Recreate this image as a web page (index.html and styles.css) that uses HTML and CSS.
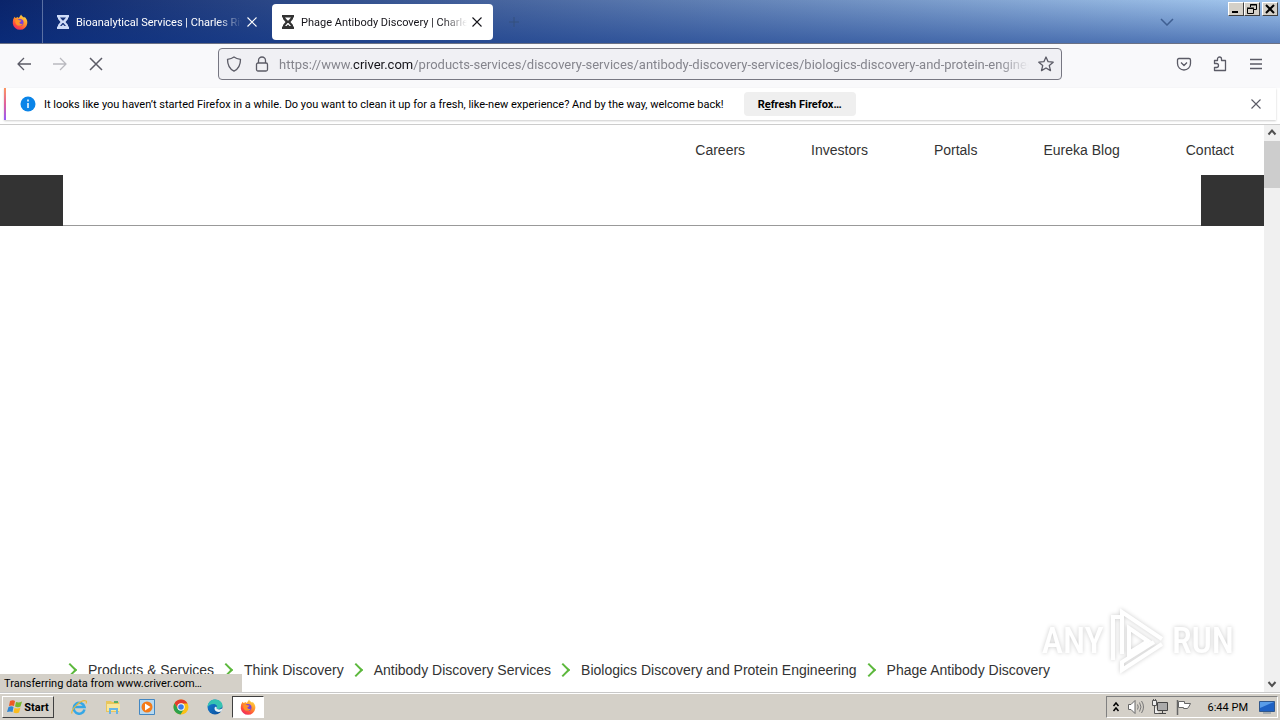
FILE: index.html
```html
<!DOCTYPE html>
<html lang="en">
  <head>
    <meta charset="UTF-8" />
    <meta name="viewport" content="width=device-width, initial-scale=1.0" />
    <title>Phage Antibody Discovery | Charles River</title>
    <link rel="stylesheet" href="styles.css" />
  </head>

  <body>
    <svg class="defs" aria-hidden="true">
      <defs>
        <linearGradient id="fx-body" x1="0.8" y1="0" x2="0.2" y2="1">
          <stop offset="0" stop-color="#ffe14a" />
          <stop offset="0.4" stop-color="#ff9a2b" />
          <stop offset="0.75" stop-color="#ff4a3d" />
          <stop offset="1" stop-color="#e5276f" />
        </linearGradient>
        <linearGradient id="edge-wave" x1="0" y1="0" x2="1" y2="1">
          <stop offset="0" stop-color="#1583d8" />
          <stop offset="1" stop-color="#0b4a97" />
        </linearGradient>
        <symbol id="firefox" viewBox="0 0 16 16">
          <path d="M1.2 5.2 2.6 2.7l.9 1.4L6 2.9l.6 1.3 2.5-3.7c.3 1.6 2 2.2 3.1 3.3l.4-1.1c1.9 1.8 3 4 2.7 6.6A7.3 7.3 0 0 1 8 15.8A7.3 7.3 0 0 1 .8 9.4c-.1-1.5.1-2.9.4-4.200z" fill="url(#fx-body)" />
          <circle cx="8" cy="8.6" r="3.5" fill="#7540dc" />
          <path d="M3.5 5.800c1.300-.7 2.700-.5 3.900.4 1 .1 1.800.1 2.100.5-.4.900-1.700 1.100-2.200 1.900.3 1.500 2.200 1.700 3.600.8-.7 2.200-4.100 3.300-6.200 1.500-1.400-1.200-1.800-3.300-1.200-5.100z" fill="#ff9326" />
        </symbol>
        <symbol id="hourglass" viewBox="0 0 14 14">
          <path d="M1 0h12v2.500h-1V4L9.500 7l2.500 3v1.500h1V14H1v-2.500h1V10l2.500-3L2 4V2.500H1z" fill="currentColor" />
          <path class="cutout" d="M4 2.500h6L7.500 5.500h-1zM6.500 8h1L10 11H8.500L7 9.500 5.500 11H4z" />
        </symbol>
        <symbol id="cross" viewBox="0 0 16 16">
          <path d="m2 2 12 12M14 2 2 14" fill="none" stroke="currentColor" stroke-width="1.5" />
        </symbol>
      </defs>
    </svg>

    <div class="desktop">
      <!-- Title bar and tabs -->
      <header class="tab-bar">
        <button class="pinned" aria-label="Firefox View">
          <svg class="icon-16"><use href="#firefox" /></svg>
        </button>
        <div class="tabs">
          <div class="tab">
            <svg class="icon-14"><use href="#hourglass" /></svg>
            <span class="tab-title">Bioanalytical Services | Charles River</span>
            <button class="tab-close" aria-label="Close tab"><svg class="icon-12"><use href="#cross" /></svg></button>
          </div>
          <div class="tab active">
            <svg class="icon-14"><use href="#hourglass" /></svg>
            <span class="tab-title">Phage Antibody Discovery | Charles River</span>
            <button class="tab-close" aria-label="Close tab"><svg class="icon-12"><use href="#cross" /></svg></button>
          </div>
        </div>
        <button class="new-tab" aria-label="New tab">
          <svg class="icon-10" viewBox="0 0 10 10"><path d="M5 0v10M0 5h10" stroke="currentColor" /></svg>
        </button>
        <button class="all-tabs" aria-label="List all tabs">
          <svg width="14" height="8" viewBox="0 0 14 8"><path d="m1 1 6 6 6-6" fill="none" stroke="currentColor" stroke-width="1.5" /></svg>
        </button>
        <div class="window-buttons">
          <button aria-label="Minimize"><svg width="12" height="10"><path d="M2 8h6" stroke="#000" stroke-width="2" /></svg></button>
          <button aria-label="Restore"><svg width="12" height="10"><path d="M4.5 3V.5h6v5H8M4 1h7M1.5 4.5h6v5h-6zM1 4h7" fill="none" stroke="#000" /></svg></button>
          <button class="close" aria-label="Close"><svg width="12" height="10"><path d="m2 1 8 8M10 1 2 9" stroke="#000" stroke-width="2" /></svg></button>
        </div>
      </header>

      <!-- Navigation toolbar -->
      <div class="toolbar">
        <div class="nav-buttons">
          <button aria-label="Back"><svg class="icon-16" viewBox="0 0 16 16"><path d="M15 8H2M8 2 2 8l6 6" /></svg></button>
          <button aria-label="Forward" disabled><svg class="icon-16" viewBox="0 0 16 16"><path d="M1 8h13M8 2l6 6-6 6" /></svg></button>
          <button aria-label="Stop"><svg class="icon-16"><use href="#cross" /></svg></button>
        </div>
        <div class="url-bar">
          <div class="site-info">
            <svg class="icon-16" viewBox="0 0 16 16"><path d="M8 1c2 1.500 4 2 6.500 2.300 0 5-1.500 9.500-6.500 11.900C3 12.800 1.500 8.300 1.500 3.300 4 3 6 2.500 8 1z" /></svg>
            <svg class="icon-16" viewBox="0 0 16 16"><path d="M4.500 7V4.500a3.500 3.500 0 0 1 7 0V7" /><rect x="2.500" y="7" width="11" height="8" rx="1.500" /></svg>
          </div>
          <div class="url" role="textbox" aria-label="Address">https://www.<b>criver.com</b>/products-services/discovery-services/antibody-discovery-services/biologics-discovery-and-protein-engineering</div>
          <button aria-label="Bookmark this page"><svg class="icon-16" viewBox="0 0 16 16"><path d="m8 1 2.100 4.700 5.100.5-3.900 3.400 1.200 5L8 12l-4.500 2.600 1.200-5L.8 6.200l5.100-.5z" /></svg></button>
        </div>
        <div class="tool-buttons">
          <button aria-label="Save to Pocket"><svg class="icon-16" viewBox="0 0 16 16"><path d="M3 2.500h10q1.500 0 1.500 1.500v3.500a6.500 6.500 0 0 1-13 0V4q0-1.500 1.500-1.500zM5 6.500l3 3 3-3" /></svg></button>
          <button aria-label="Extensions"><svg class="icon-16" viewBox="0 0 16 16"><path d="M5.500 4.500V3a2 2 0 0 1 4 0v1.500h4v10h-11v-3h2a1.700 1.700 0 0 0 0-4h-2v-3z" /></svg></button>
          <button aria-label="Menu"><svg class="icon-16" viewBox="0 0 16 16"><path d="M2 3.500h12M2 8h12M2 12.500h12" /></svg></button>
        </div>
      </div>

      <!-- Notification bar -->
      <div class="notice">
        <svg class="icon-16" viewBox="0 0 16 16"><circle cx="8" cy="8" r="7.500" fill="#0a84e8" /><path d="M8 3.500v2M8 7v5" stroke="#fff" stroke-width="1.500" /></svg>
        <span class="notice-text">It looks like you haven’t started Firefox in a while. Do you want to clean it up for a fresh, like-new experience? And by the way, welcome back!</span>
        <button class="refresh"><span>R<u>e</u>fresh Firefox…</span></button>
        <button class="notice-close" aria-label="Dismiss"><svg class="icon-12"><use href="#cross" /></svg></button>
      </div>

      <!-- Web page -->
      <div class="viewport">
        <main class="page">
          <nav class="top-links">
            <a href="#">Careers</a>
            <a href="#">Investors</a>
            <a href="#">Portals</a>
            <a href="#">Eureka Blog</a>
            <a href="#">Contact</a>
          </nav>
          <div class="site-bar">
            <div class="block"></div>
            <div class="block"></div>
          </div>
          <nav class="breadcrumbs" aria-label="Breadcrumb">
            <a href="#">Products &amp; Services</a>
            <a href="#">Think Discovery</a>
            <a href="#">Antibody Discovery Services</a>
            <a href="#">Biologics Discovery and Protein Engineering</a>
            <a href="#">Phage Antibody Discovery</a>
          </nav>
        </main>
        <div class="scrollbar">
          <svg width="16" height="16" viewBox="0 0 16 16"><path d="m4.500 9.500 3.500-4 3.500 4" /></svg>
          <div class="thumb"></div>
          <svg width="16" height="16" viewBox="0 0 16 16"><path d="m4.500 6 3.500 4 3.500-4" /></svg>
        </div>
        <div class="status">Transferring data from www.criver.com…</div>
        <div class="watermark">
          <span>ANY</span>
          <svg width="58" height="66" viewBox="0 0 58 66"><path d="M4 52V9h7M13 46V4l40 27M53 36 13 62v-8l32-20M20 45V20l19 13z" /></svg>
          <span>RUN</span>
        </div>
      </div>

      <!-- Taskbar -->
      <footer class="taskbar">
        <button class="start">
          <svg width="16" height="16" viewBox="0 0 16 16"><path d="M3 2q3-1.500 5 0L7 7Q5 6 2 7z" fill="#ed5a24" /><path d="M9 3q3 1 6-.5L13.500 7.500Q11 9 8 7.500z" fill="#76b82a" /><path d="M1.500 8q3-1.500 5 0L5.500 13Q3.500 12 0 13z" fill="#2f86d2" /><path d="M7.500 9q3 1 6-.5L12 13.500Q9.500 15 6.500 13.500z" fill="#fbbc1d" /></svg>
          Start
        </button>
        <div class="launchers">
          <button aria-label="Internet Explorer">
            <svg class="icon-16" viewBox="0 0 16 16"><path d="M13.500 10.500A5.500 5.500 0 1 1 13.500 8H4" fill="none" stroke="#35a7e6" stroke-width="2.500" /><path d="M1 14.500C-.5 11 10 0 15 2c.8.5.5 1.500 0 2.500" fill="none" stroke="#e9b93a" stroke-width="1.200" /></svg>
          </button>
          <button aria-label="Explorer">
            <svg class="icon-16" viewBox="0 0 16 16"><path d="M1 2h5l1 1h7v10H1z" fill="#e8c65c" /><path d="M2 5h13v7H2z" fill="#f8e69c" /><path d="M4 15V9h9v6h-2v-4H6v4z" fill="#67b5e6" /><path d="M9 2h4v2H9z" fill="#58ae67" /></svg>
          </button>
          <button aria-label="Media Player">
            <svg class="icon-16" viewBox="0 0 16 16"><path d="M.5.500h15v15H.5z" fill="#b7d9f0" stroke="#4387c2" /><circle cx="8" cy="8" r="5.500" fill="#f47b18" /><path d="m6 4.500 5.500 3.500L6 11.500z" fill="#fff" /></svg>
          </button>
          <button aria-label="Chrome">
            <svg class="icon-16" viewBox="0 0 16 16"><circle cx="8" cy="8" r="7.500" fill="#fbc116" /><path d="M1.500 4.200A7.500 7.500 0 0 1 14.500 4.500H8L5 10z" fill="#e33b2e" /><path d="M1.500 4.200A7.500 7.500 0 0 0 7.500 15.500L11 10H5z" fill="#2ca14c" /><circle cx="8" cy="8" r="3.700" fill="#fff" /><circle cx="8" cy="8" r="2.800" fill="#3b7de9" /></svg>
          </button>
          <button aria-label="Edge">
            <svg class="icon-16" viewBox="0 0 16 16"><circle cx="8" cy="8" r="7.500" fill="url(#edge-wave)" /><path d="M.5 8C1 3 4 .500 8 .500c4.500 0 7.500 3 7.500 6 0 3-4 4.500-6 3 1.500-2 0-4.500-3-4.500S1.500 6.500.5 8z" fill="#35c3b2" /><path d="M9.500 9.500c2 1.500 5 1 6-.5l-.8 3c-3 2-7.200.5-7.200-2.500 0-1 .6-1.500 1.500-2 .8.800.8 1.300.5 2z" fill="#e8f3f6" /></svg>
          </button>
          <button class="running" aria-label="Firefox"><svg class="icon-16"><use href="#firefox" /></svg></button>
        </div>
        <div class="tray">
          <svg width="8" height="12" viewBox="0 0 8 12"><path d="m1.500 5 2.500-3 2.500 3M1.500 10 4 7l2.500 3" fill="none" stroke="#000" stroke-width="1.500" /></svg>
          <svg class="icon-16" viewBox="0 0 16 16"><path d="M.5 5.500H3l4-4v13l-4-4H.5z" fill="#fff" stroke="#666" /><path d="M9.500 5.500q1.500 2.500 0 5M11.500 3.500q3 4.500 0 9M13.500 2q4 6 0 12" fill="none" stroke="#777" /></svg>
          <svg class="icon-16" viewBox="0 0 16 16"><path d="M5.500 3.500h10v8h-10zM7 14.500h7M10.500 12v2" fill="#aaa" stroke="#444" /><path d="M.5 1.500h4v5h-4zM1.500 0v2M3.500 0v2M2.500 7v7.500H7" fill="#eee" stroke="#555" /></svg>
          <svg class="icon-16" viewBox="0 0 16 16"><path d="M1.500 1v15" stroke="#666" stroke-width="1.500" /><path d="M2.500 2.500h6v2h6q-1 2.500-3 5h-4v-1h-5z" fill="#fff" stroke="#666" /></svg>
          <time class="clock">6:44 PM</time>
          <svg class="icon-16" viewBox="0 0 16 16"><path d="M.5 2.500h15v10H.5z" fill="#1f62c4" stroke="#31588c" /><path d="M1 3h14L1 9z" fill="#5a9de8" /><path d="M4 14h8" stroke="#789" /></svg>
        </div>
      </footer>
    </div>
  </body>
</html>
```
FILE: styles.css
```css
* {
  box-sizing: border-box;
}

body,
html {
  margin: 0;
  height: 100%;
  font-family: Tahoma, Roboto, sans-serif;
  font-size: 11px;
  color: #000;
}

button {
  display: flex;
  align-items: center;
  justify-content: center;
  padding: 0;
  border: 0;
  background: none;
  color: inherit;
  font: inherit;
}

svg {
  flex: none;
}

.defs {
  position: absolute;
  width: 0;
  height: 0;
}

.icon-16 {
  width: 16px;
  height: 16px;
}

.icon-14 {
  width: 14px;
  height: 14px;
}

.icon-12 {
  width: 12px;
  height: 12px;
}

.icon-10 {
  width: 10px;
  height: 10px;
}

.desktop {
  display: flex;
  flex-direction: column;
  height: 100vh;
  overflow: hidden;
}

/* Title bar and tabs */
.tab-bar {
  display: flex;
  align-items: center;
  height: 44px;
  flex: none;
  background:
    linear-gradient(transparent, rgba(10, 50, 135, 0.5)),
    linear-gradient(90deg, #0a246a, #a6caf0);
  border-bottom: 1px solid #6b7184;
}

.pinned {
  width: 43px;
  height: 100%;
  padding-right: 3px;
  border-right: 1px solid #5a70a3;
}

.tabs {
  display: flex;
  gap: 4px;
  padding-left: 4px;
}

.tab {
  --cutout: #17327a;
  display: flex;
  align-items: center;
  width: 221px;
  height: 36px;
  padding: 0 10px 0 9px;
  border-radius: 4px;
  color: #fff;
}

.tab > svg {
  color: #cfdcf8;
}

.tab.active {
  --cutout: #fff;
  background: #fff;
  color: #15141a;
}

.tab.active > svg {
  color: #333;
}

.cutout {
  fill: var(--cutout);
}

.tab-title {
  flex: 1;
  margin: 0 4px 0 6px;
  padding-top: 2px;
  overflow: hidden;
  white-space: nowrap;
  mask-image: linear-gradient(90deg, #000 85%, transparent);
}

.new-tab {
  margin-left: 16px;
  color: #34507f;
}

.all-tabs {
  margin-left: auto;
  color: #3f5f92;
}

.window-buttons {
  display: flex;
  align-self: flex-start;
  margin-left: 54px;
  padding: 2px 2px 0 0;
}

.window-buttons button {
  width: 16px;
  height: 14px;
  background: #d4d0c8;
  border: 1px solid;
  border-color: #fff #404040 #404040 #fff;
}

.window-buttons .close {
  margin-left: 2px;
}

/* Navigation toolbar */
.toolbar {
  display: flex;
  align-items: center;
  height: 44px;
  flex: none;
  padding: 0 16px 4px;
  background: #f9f9fb;
  color: #5b5b66;
}

.toolbar svg {
  fill: none;
  stroke: currentColor;
  stroke-width: 1.3;
  stroke-linejoin: round;
}

.nav-buttons,
.tool-buttons {
  display: flex;
  gap: 20px;
}

.nav-buttons button:disabled {
  opacity: 0.4;
}

.url-bar {
  display: flex;
  align-items: center;
  gap: 9px;
  flex: 1;
  min-width: 0;
  height: 32px;
  margin: 0 114px;
  padding: 0 7px;
  background: #f0f0f4;
  border: 1px solid #777782;
  border-radius: 4px;
}

.site-info {
  display: flex;
  gap: 12px;
}

.url {
  flex: 1;
  overflow: hidden;
  white-space: nowrap;
  font-size: 13px;
  color: #85858d;
  mask-image: linear-gradient(90deg, #000 96%, transparent);
}

.url b {
  font-weight: normal;
  color: #15141a;
}

/* Notification bar */
.notice {
  display: flex;
  align-items: center;
  height: 32px;
  flex: none;
  margin: 0 4px;
  padding: 0 14px;
  background: #fff;
  border-left: 2px solid;
  border-image: linear-gradient(#ff9a5c, #e0609c, #9059ff) 1;
  box-shadow: 0 1px 2px #ccc;
}

.notice-text {
  margin: 0 20px 0 8px;
  white-space: nowrap;
}

.refresh {
  width: 112px;
  height: 24px;
  background: #efefef;
  border-radius: 4px;
  font-weight: bold;
}

.notice-close {
  margin-left: auto;
  color: #5b5b66;
}

/* Web page */
.viewport {
  position: relative;
  display: flex;
  flex: 1;
  min-height: 0;
  margin-top: 4px;
  border-top: 1px solid #ccc;
  border-bottom: 1px solid #c8c8c8;
}

.page {
  display: flex;
  flex-direction: column;
  flex: 1;
  min-width: 0;
  background: #fff;
  font-family: "Liberation Sans", Arial, sans-serif;
  font-size: 14px;
}

.page a {
  color: #333;
  text-decoration: none;
}

.top-links {
  display: flex;
  align-items: center;
  justify-content: flex-end;
  gap: 66px;
  height: 50px;
  padding-right: 30px;
}

.site-bar {
  display: flex;
  justify-content: space-between;
  border-bottom: 1px solid #999;
}

.block {
  width: 63px;
  height: 51px;
  margin-bottom: -1px;
  background: #333;
}

.breadcrumbs {
  display: flex;
  gap: 7px;
  margin-top: auto;
  padding: 0 0 14px 65px;
  white-space: nowrap;
}

.breadcrumbs a {
  display: flex;
  align-items: center;
  gap: 13px;
}

.breadcrumbs a::before {
  content: "";
  width: 8px;
  height: 8px;
  border: solid #5cb83c;
  border-width: 2px 2px 0 0;
  transform: rotate(45deg);
}

.scrollbar {
  width: 16px;
  display: flex;
  flex-direction: column;
  background: #f0f0f0;
}

.scrollbar svg {
  fill: none;
  stroke: #505050;
  stroke-width: 2;
}

.scrollbar svg:last-child {
  margin-top: auto;
}

.thumb {
  height: 47px;
  background: #cdcdcd;
}

.status {
  position: absolute;
  left: 0;
  bottom: 0;
  width: 242px;
  height: 18px;
  padding-left: 4px;
  line-height: 20px;
  background: #d4d0c8;
}

.watermark {
  position: absolute;
  right: 46px;
  bottom: 18px;
  display: flex;
  align-items: center;
  gap: 5px;
  color: #fff;
  font-family: "Roboto Condensed", Roboto, sans-serif;
  font-size: 36px;
  font-weight: 500;
  filter: drop-shadow(0 0 2px #ccc);
}

.watermark path {
  fill: none;
  stroke: #fff;
  stroke-width: 4;
}

/* Taskbar */
.taskbar {
  display: flex;
  align-items: center;
  height: 27px;
  flex: none;
  padding: 0 2px;
  background: #d4d0c8;
  border-top: 1px solid #fff;
}

.start {
  gap: 1px;
  width: 52px;
  height: 22px;
  border: 1px solid;
  border-color: #fff #404040 #404040 #fff;
  font-weight: bold;
}

.launchers {
  display: flex;
  margin-left: 8px;
}

.launchers button {
  width: 34px;
  height: 22px;
}

.launchers .running {
  width: 32px;
  background: #fff;
  border: 1px solid;
  border-color: #404040 #fff #fff #404040;
}

.tray {
  display: flex;
  align-items: center;
  gap: 8px;
  height: 22px;
  margin-left: auto;
  padding: 0 2px 0 5px;
  border: 1px solid;
  border-color: #808080 #fff #fff #808080;
}

.clock {
  margin: 0 3px 0 8px;
}
```
